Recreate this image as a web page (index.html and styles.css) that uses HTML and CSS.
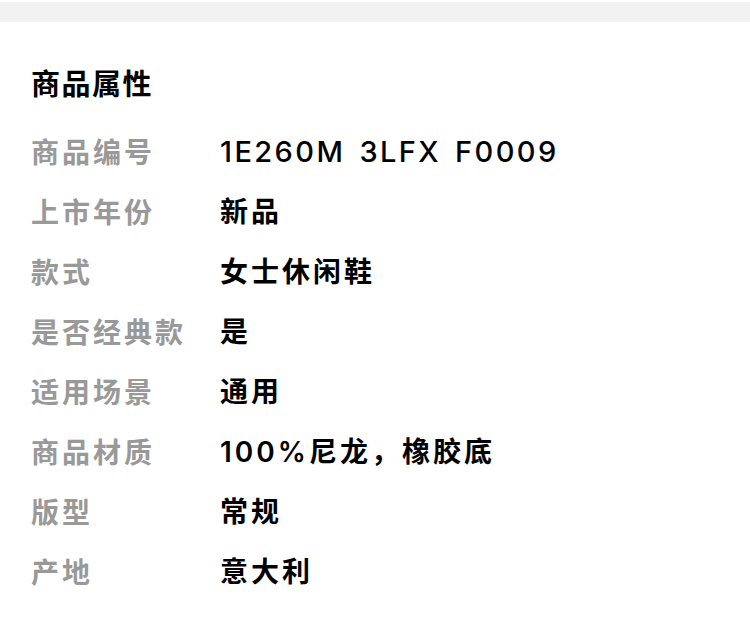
FILE: index.html
```html
<!DOCTYPE html>
<html lang="zh-CN">
<head>
<meta charset="utf-8">
<link rel="stylesheet" href="styles.css">
</head>
<body>
<div class="topbar"></div>
<section class="props">
  <h2 class="title">商品属性</h2>
  <dl class="list">
    <div class="row"><dt>商品编号</dt><dd class="latin">1E260M 3LFX F0009</dd></div>
    <div class="row"><dt>上市年份</dt><dd>新品</dd></div>
    <div class="row"><dt>款式</dt><dd>女士休闲鞋</dd></div>
    <div class="row"><dt>是否经典款</dt><dd>是</dd></div>
    <div class="row"><dt>适用场景</dt><dd>通用</dd></div>
    <div class="row"><dt>商品材质</dt><dd><span class="num">100%</span>尼龙，橡胶底</dd></div>
    <div class="row"><dt>版型</dt><dd>常规</dd></div>
    <div class="row"><dt>产地</dt><dd>意大利</dd></div>
  </dl>
</section>
</body>
</html>
```

FILE: styles.css
```css
html, body {
  margin: 0;
  padding: 0;
  background: #ffffff;
}
body {
  padding-top: 2px;
  font-family: "Noto Sans", "Noto Sans CJK SC", sans-serif;
}
.topbar {
  height: 20px;
  background: #f2f2f2;
}
.props {
  padding: 42px 32px 0 31px;
}
.title {
  margin: 0 0 18px 0;
  font-size: 29px;
  line-height: 40px;
  font-weight: 700;
  letter-spacing: 1.5px;
  color: #000;
}
.list {
  margin: 0;
}
.row {
  display: grid;
  grid-template-columns: 189px 1fr;
  height: 60px;
  align-items: center;
}
.row dt {
  font-size: 28px;
  line-height: 60px;
  color: #999999;
  font-weight: 700;
  letter-spacing: 3px;
}
.row dd {
  margin: 0;
  font-family: "Inter", "Noto Sans CJK SC", sans-serif;
  font-size: 28px;
  line-height: 60px;
  color: #000;
  font-weight: 700;
  letter-spacing: 3px;
}
.row dd .num {
  font-weight: 600;
  letter-spacing: 3px;
}
.row dd.latin {
  font-weight: 500;
  font-size: 29px;
  letter-spacing: 2.4px;
  word-spacing: 4px;
}
```
